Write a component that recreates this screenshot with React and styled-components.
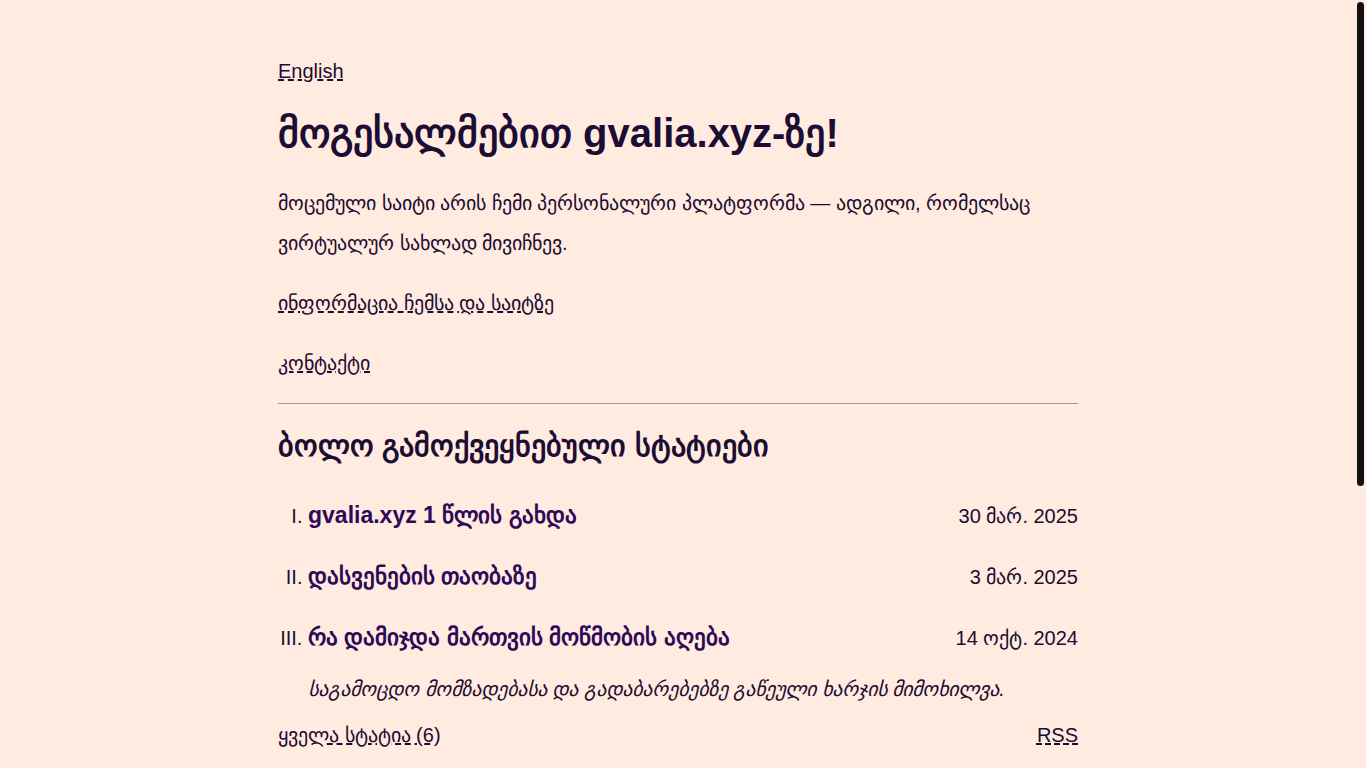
import React from "react";
import styled, { createGlobalStyle } from "styled-components";

const Global = createGlobalStyle`
  html {
    background: #ffebdf;
  }
  body {
    margin: 0;
    padding-right: 10px;
    background: #ffebdf;
    color: #1b0d33;
    font-family: "Liberation Sans", Arial, sans-serif;
  }
`;

const ScrollThumb = styled.div`
  position: fixed;
  top: 2px;
  right: 2px;
  width: 7px;
  height: 484px;
  border-radius: 4px;
  background: #111;
`;

const Page = styled.main`
  width: 800px;
  margin: 0 auto;
  padding: 58px 0 460px;
`;

const Link = styled.a`
  color: #1b0d33;
  font-size: 20px;
  text-decoration: underline dashed;
  cursor: pointer;
`;

const LangRow = styled.div`
  font-size: 20px;
  line-height: 26px;
`;

const Title = styled.h1`
  margin: 22px 0 23px;
  font-size: 40px;
  line-height: 54px;
  font-weight: 700;
`;

const Para = styled.p`
  margin: 0 0 20px;
  font-size: 20px;
  line-height: 40px;
`;

const NavLine = styled.p`
  margin: 0 0 20px;
  font-size: 20px;
  line-height: 40px;
`;

const Rule = styled.hr`
  border: 0;
  border-top: 1px solid #9a9a9a;
  margin: 20px 0 18px;
`;

const SubTitle = styled.h2`
  margin: 0 0 25px;
  font-size: 30px;
  line-height: 48px;
  font-weight: 700;
`;

const List = styled.ol`
  list-style: upper-roman;
  margin: 0;
  padding-left: 30px;
`;

const Item = styled.li`
  font-size: 20px;
  line-height: 40px;
  margin-bottom: 21px;
  &:last-child {
    margin-bottom: 6px;
  }
`;

const ItemHead = styled.div`
  display: flex;
  justify-content: space-between;
  align-items: baseline;
  height: 40px;
`;

const ItemTitle = styled.a`
  color: #2d0a57;
  font-size: 23px;
  font-weight: 700;
  text-decoration: none;
  cursor: pointer;
`;

const ItemDate = styled.span`
  font-size: 20px;
`;

const ItemDesc = styled.p`
  margin: 12px 0 0;
  font-style: italic;
  font-size: 20px;
  line-height: 40px;
`;

const Footer = styled.div`
  display: flex;
  justify-content: space-between;
  font-size: 20px;
  line-height: 40px;
`;

const posts = [
  { title: "gvalia.xyz 1 წლის გახდა", date: "30 მარ. 2025" },
  { title: "დასვენების თაობაზე", date: "3 მარ. 2025" },
  {
    title: "რა დამიჯდა მართვის მოწმობის აღება",
    date: "14 ოქტ. 2024",
    desc: "საგამოცდო მომზადებასა და გადაბარებებზე გაწეული ხარჯის მიმოხილვა.",
  },
];

export default function App() {
  return (
    <>
      <Global />
      <ScrollThumb />
      <Page>
        <LangRow>
          <Link>English</Link>
        </LangRow>
        <Title>მოგესალმებით gvalia.xyz-ზე!</Title>
        <Para>
          მოცემული საიტი არის ჩემი პერსონალური პლატფორმა — ადგილი, რომელსაც
          ვირტუალურ სახლად მივიჩნევ.
        </Para>
        <NavLine>
          <Link>ინფორმაცია ჩემსა და საიტზე</Link>
        </NavLine>
        <NavLine>
          <Link>კონტაქტი</Link>
        </NavLine>
        <Rule />
        <SubTitle>ბოლო გამოქვეყნებული სტატიები</SubTitle>
        <List>
          {posts.map((p) => (
            <Item key={p.title}>
              <ItemHead>
                <ItemTitle>{p.title}</ItemTitle>
                <ItemDate>{p.date}</ItemDate>
              </ItemHead>
              {p.desc && <ItemDesc>{p.desc}</ItemDesc>}
            </Item>
          ))}
        </List>
        <Footer>
          <Link>ყველა სტატია (6)</Link>
          <Link>RSS</Link>
        </Footer>
      </Page>
    </>
  );
}
